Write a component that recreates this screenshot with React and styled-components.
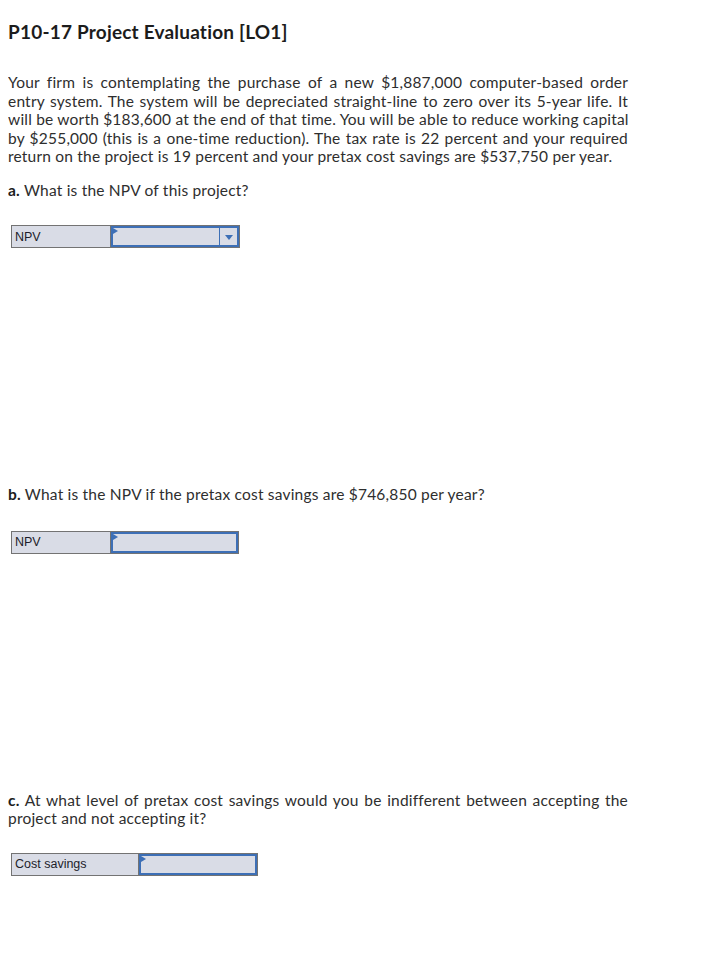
import React from "react";
import styled, { createGlobalStyle } from "styled-components";

const Global = createGlobalStyle`
  body {
    margin: 8px;
    background: #ffffff;
    font-family: Lato, "Open Sans", Arial, sans-serif;
    color: #2e2e2e;
  }
`;

const Page = styled.div`
  width: 620px;
  display: flex;
  flex-direction: column;
`;

const Title = styled.h1`
  margin: 14px 0 0 0;
  font-size: 19px;
  line-height: 20px;
  font-weight: 700;
  letter-spacing: 0.2px;
  color: #1c1c1c;
`;

const Paragraph = styled.div`
  margin-top: ${(p) => p.$mt}px;
  font-size: 15.5px;
  line-height: 18.5px;
  letter-spacing: 0.2px;
`;

const Line = styled.span`
  display: block;
  white-space: nowrap;
  text-align: justify;
  text-align-last: ${(p) => (p.$last ? "left" : "justify")};
`;

const Part = styled.b`
  font-weight: 700;
  color: #1c1c1c;
`;

const AnswerRow = styled.div`
  margin: ${(p) => p.$mt}px 0 0 3px;
  display: inline-flex;
  align-self: flex-start;
  height: 21px;
  border: 1px solid #737373;
  background: #d9dce6;
`;

const LabelCell = styled.div`
  width: ${(p) => p.$w}px;
  box-sizing: border-box;
  padding-left: 3px;
  border-right: 1px solid #737373;
  display: flex;
  align-items: center;
  font-family: "Liberation Sans", Arial, sans-serif;
  font-size: 12.5px;
  letter-spacing: 0;
  color: #1d1d2b;
`;

const InputCell = styled.div`
  position: relative;
  width: ${(p) => p.$w}px;
  box-sizing: border-box;
  border: 2px solid #3d6fb6;
  background: #d9dce6;
  display: flex;
  justify-content: flex-end;
`;

const Flag = styled.span`
  position: absolute;
  left: 0;
  top: 0;
  width: 0;
  height: 0;
  border-top: 3px solid transparent;
  border-bottom: 3px solid transparent;
  border-left: 5px solid #3d6fb6;
`;

const DropButton = styled.div`
  width: 17px;
  border-left: 1px solid #3d6fb6;
  display: flex;
  align-items: center;
  justify-content: center;
`;

const Caret = styled.span`
  width: 0;
  height: 0;
  border-left: 4.5px solid transparent;
  border-right: 4.5px solid transparent;
  border-top: 5px solid #3d6fb6;
  margin-top: 1px;
`;

function Answer({ label, labelW, inputW, dropdown, mt }) {
  return (
    <AnswerRow $mt={mt}>
      <LabelCell $w={labelW}>{label}</LabelCell>
      <InputCell $w={inputW}>
        <Flag />
        {dropdown && (
          <DropButton>
            <Caret />
          </DropButton>
        )}
      </InputCell>
    </AnswerRow>
  );
}

export default function App() {
  return (
    <>
      <Global />
      <Page>
        <Title>P10-17 Project Evaluation [LO1]</Title>
        <Paragraph $mt={31}>
          <Line>Your firm is contemplating the purchase of a new $1,887,000 computer-based order</Line>
          <Line>entry system. The system will be depreciated straight-line to zero over its 5-year life. It</Line>
          <Line>will be worth $183,600 at the end of that time. You will be able to reduce working capital</Line>
          <Line>by $255,000 (this is a one-time reduction). The tax rate is 22 percent and your required</Line>
          <Line $last>return on the project is 19 percent and your pretax cost savings are $537,750 per year.</Line>
        </Paragraph>
        <Paragraph $mt={15}>
          <Line $last>
            <Part>a.</Part> What is the NPV of this project?
          </Line>
        </Paragraph>
        <Answer label="NPV" labelW={99} inputW={128} dropdown mt={26} />
        <Paragraph $mt={237}>
          <Line $last>
            <Part>b.</Part> What is the NPV if the pretax cost savings are $746,850 per year?
          </Line>
        </Paragraph>
        <Answer label="NPV" labelW={99} inputW={127} mt={27} />
        <Paragraph $mt={237}>
          <Line>
            <Part>c.</Part> At what level of pretax cost savings would you be indifferent between accepting the
          </Line>
          <Line $last>project and not accepting it?</Line>
        </Paragraph>
        <Answer label="Cost savings" labelW={127} inputW={118} mt={25} />
      </Page>
    </>
  );
}
